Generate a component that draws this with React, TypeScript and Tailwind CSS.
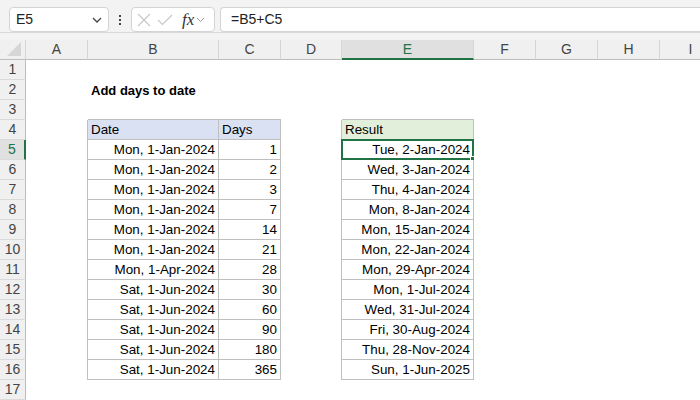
import React from "react";

const data: [string, string, string][] = [
  ["Mon, 1-Jan-2024", "1", "Tue, 2-Jan-2024"],
  ["Mon, 1-Jan-2024", "2", "Wed, 3-Jan-2024"],
  ["Mon, 1-Jan-2024", "3", "Thu, 4-Jan-2024"],
  ["Mon, 1-Jan-2024", "7", "Mon, 8-Jan-2024"],
  ["Mon, 1-Jan-2024", "14", "Mon, 15-Jan-2024"],
  ["Mon, 1-Jan-2024", "21", "Mon, 22-Jan-2024"],
  ["Mon, 1-Apr-2024", "28", "Mon, 29-Apr-2024"],
  ["Sat, 1-Jun-2024", "30", "Mon, 1-Jul-2024"],
  ["Sat, 1-Jun-2024", "60", "Wed, 31-Jul-2024"],
  ["Sat, 1-Jun-2024", "90", "Fri, 30-Aug-2024"],
  ["Sat, 1-Jun-2024", "180", "Thu, 28-Nov-2024"],
  ["Sat, 1-Jun-2024", "365", "Sun, 1-Jun-2025"],
];

const cols = ["A", "B", "C", "D", "E", "F", "G", "H", "I"];

type CellProps = {
  text?: string;
  right?: boolean;
  bold?: boolean;
  bg?: string;
  br?: boolean;
  bb?: boolean;
  selected?: boolean;
};

function Cell({ text, right, bold, bg, br, bb, selected }: CellProps) {
  return (
    <div
      className={
        "relative flex items-end pb-[1px] px-[3px] whitespace-nowrap overflow-visible text-[13.4px] leading-[16px] text-black " +
        (right ? "justify-end " : "justify-start ") +
        (bold ? "font-bold text-[13px] " : "") +
        (bg ?? "bg-white ") +
        (br ? " border-r border-r-[#bfbfbf] " : "") +
        (bb ? " border-b border-b-[#bfbfbf] " : "")
      }
    >
      {text}
      {selected && (
        <>
          <div className="absolute left-[-1px] top-[-1px] right-[-1px] bottom-[-1px] border-2 border-[#217346]" />
          <div className="absolute right-[-4px] bottom-[-4px] w-[7px] h-[7px] bg-[#217346] border border-white" />
        </>
      )}
    </div>
  );
}

export default function App() {
  const rows: React.ReactNode[] = [];
  for (let r = 1; r <= 17; r++) {
    const sel = r === 5;
    rows.push(
      <div
        key={"h" + r}
        className={
          "flex items-center justify-center text-[14px] border-b border-b-[#dadada] " +
          (sel
            ? "bg-[#e0e0e0] text-[#217346] border-r-2 border-r-[#217346]"
            : "bg-[#f0f0f0] text-[#444] border-r border-r-[#bdbdbd]")
        }
      >
        {r}
      </div>
    );
    const inTable = r >= 4 && r <= 16;
    const above = r === 3;
    const d = r >= 5 && r <= 16 ? data[r - 5] : null;
    rows.push(<Cell key={r + "A"} br={inTable} />);
    if (r === 2) {
      rows.push(<Cell key={r + "B"} text="Add days to date" bold />);
    } else if (r === 4) {
      rows.push(<Cell key={r + "B"} text="Date" bg="bg-[#d9e1f2]" br bb />);
    } else {
      rows.push(<Cell key={r + "B"} text={d ? d[0] : undefined} right br={inTable} bb={inTable || above} />);
    }
    if (r === 4) {
      rows.push(<Cell key={r + "C"} text="Days" bg="bg-[#d9e1f2]" br bb />);
    } else {
      rows.push(<Cell key={r + "C"} text={d ? d[1] : undefined} right br={inTable} bb={inTable || above} />);
    }
    rows.push(<Cell key={r + "D"} br={inTable} />);
    if (r === 4) {
      rows.push(<Cell key={r + "E"} text="Result" bg="bg-[#e2efda]" br bb />);
    } else {
      rows.push(
        <Cell key={r + "E"} text={d ? d[2] : undefined} right br={inTable} bb={inTable || above} selected={sel} />
      );
    }
    rows.push(<Cell key={r + "F"} />);
    rows.push(<Cell key={r + "G"} />);
    rows.push(<Cell key={r + "H"} />);
    rows.push(<Cell key={r + "I"} />);
  }

  return (
    <div
      className="w-[700px] h-[400px] overflow-hidden bg-white"
      style={{ fontFamily: '"Liberation Sans", Arial, sans-serif' }}
    >
      <div className="h-[40px] bg-[#f3f3f3]">
        <div className="h-[33px] flex items-start pt-[7px] border-b border-b-[#d9d9d9]">
          <div className="ml-[9px] w-[100px] h-[25px] bg-white border border-[#d4d4d4] rounded-[4px] flex items-center justify-between pl-[6px] pr-[6px]">
            <span className="text-[14px] text-[#222]">E5</span>
            <svg width="10" height="6" viewBox="0 0 10 6">
              <path d="M1 1 L5 5 L9 1" fill="none" stroke="#444" strokeWidth="1.3" />
            </svg>
          </div>
          <div className="w-[22px] h-[25px] flex flex-col items-center justify-center gap-[2px]">
            <div className="w-[2px] h-[2px] bg-[#444]" />
            <div className="w-[2px] h-[2px] bg-[#444]" />
            <div className="w-[2px] h-[2px] bg-[#444]" />
          </div>
          <div className="w-[84px] h-[25px] bg-white border border-[#d4d4d4] rounded-[4px] flex items-center pl-[5px]">
            <svg width="14" height="14" viewBox="0 0 14 14" className="mr-[6px]">
              <path d="M1 1 L13 13 M13 1 L1 13" stroke="#c8c8c8" strokeWidth="1.2" />
            </svg>
            <svg width="16" height="12" viewBox="0 0 16 12" className="mr-[9px]">
              <path d="M1 6 L5.5 10.5 L15 1" fill="none" stroke="#c8c8c8" strokeWidth="1.2" />
            </svg>
            <span
              className="text-[17px] italic text-[#333] leading-none mr-[2px]"
              style={{ fontFamily: '"Liberation Serif", "Times New Roman", serif' }}
            >
              fx
            </span>
            <svg width="9" height="6" viewBox="0 0 9 6">
              <path d="M1 1 L4.5 4.5 L8 1" fill="none" stroke="#999" strokeWidth="1" />
            </svg>
          </div>
          <div className="ml-[5px] flex-1 h-[25px] bg-white border border-[#d4d4d4] rounded-l-[4px] border-r-0 flex items-center pl-[10px]">
            <span className="text-[14px] text-[#222]">=B5+C5</span>
          </div>
        </div>
      </div>

      <div className="grid grid-cols-[26px_62px_131px_62px_61px_132px_62px_62px_62px_62px] auto-rows-[20px]">
        <div className="bg-[#f0f0f0] border-b border-b-[#bdbdbd] border-r border-r-[#d5d5d5] flex items-end justify-end pr-[4px] pb-[3px]">
          <svg width="14" height="14" viewBox="0 0 14 14">
            <path d="M14 0 L14 14 L0 14 Z" fill="#d6d6d6" />
          </svg>
        </div>
        {cols.map((c) => (
          <div
            key={c}
            className={
              "flex items-center justify-center text-[14px] border-r border-r-[#d5d5d5] " +
              (c === "E"
                ? "bg-[#e0e0e0] text-[#217346] border-b-2 border-b-[#217346]"
                : "bg-[#f0f0f0] text-[#444] border-b border-b-[#bdbdbd]")
            }
          >
            {c}
          </div>
        ))}
        {rows}
      </div>
    </div>
  );
}
